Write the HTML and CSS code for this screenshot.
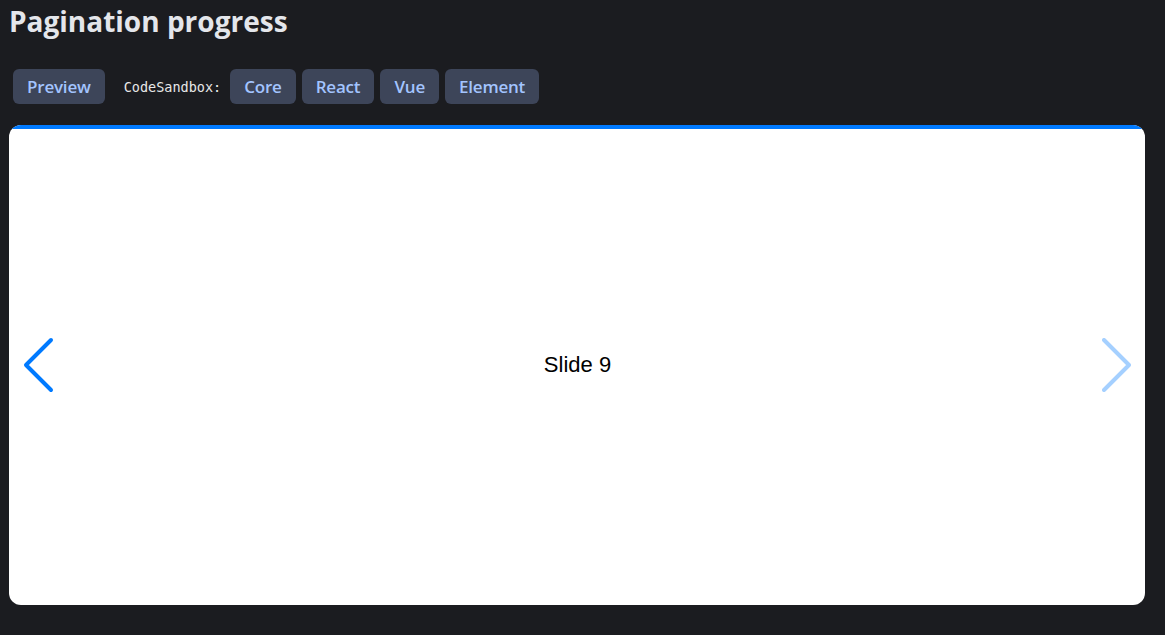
FILE: index.html
```html
<!DOCTYPE html>
<html>
<head>
<meta charset="utf-8">
<link rel="stylesheet" href="styles.css">
</head>
<body>
<h1 class="title">Pagination progress</h1>
<div class="toolbar">
  <button class="btn">Preview</button>
  <span class="label">CodeSandbox:</span>
  <button class="btn">Core</button>
  <button class="btn">React</button>
  <button class="btn">Vue</button>
  <button class="btn">Element</button>
</div>
<div class="swiper">
  <div class="progress"></div>
  <div class="slide">Slide 9</div>
  <button class="nav nav-prev" aria-label="Previous">
    <svg width="31" height="56" viewBox="0 0 31 56"><path d="M28 3 L3 28 L28 53" fill="none" stroke="currentColor" stroke-width="4" stroke-linecap="round" stroke-linejoin="round"/></svg>
  </button>
  <button class="nav nav-next disabled" aria-label="Next">
    <svg width="31" height="56" viewBox="0 0 31 56"><path d="M3 3 L28 28 L3 53" fill="none" stroke="currentColor" stroke-width="4" stroke-linecap="round" stroke-linejoin="round"/></svg>
  </button>
</div>
</body>
</html>
```
FILE: styles.css
```css
html, body {
  background: #1b1c20;
}
body {
  margin: 0;
  padding: 0 20px 0 9px;
  font-family: "Open Sans", "Noto Sans", sans-serif;
}
.title {
  margin: 0;
  padding-top: 2px;
  font-size: 28px;
  line-height: 38px;
  font-weight: 700;
  color: #e4e6eb;
}
.toolbar {
  display: flex;
  align-items: center;
  gap: 6px;
  margin: 29px 0 0 4px;
  height: 35px;
}
.btn {
  height: 35px;
  padding: 0 14px;
  border: 0;
  border-radius: 6px;
  background: #3d4559;
  color: #a3c4ff;
  font-family: "Open Sans", "Noto Sans", sans-serif;
  font-size: 17px;
  font-weight: 600;
  letter-spacing: -0.2px;
  cursor: pointer;
}
.label {
  margin: 0 3px 0 13px;
  font-family: "DejaVu Sans Mono", monospace;
  font-size: 13.5px;
  color: #e8e8e8;
}
.swiper {
  position: relative;
  margin-top: 21px;
  height: 480px;
  background: #fff;
  border-radius: 12px;
  overflow: hidden;
  display: flex;
  align-items: center;
  justify-content: center;
}
.progress {
  position: absolute;
  left: 0;
  top: 0;
  right: 0;
  height: 4px;
  background: #007aff;
}
.slide {
  font-family: "Liberation Sans", Arial, sans-serif;
  font-size: 22px;
  color: #000;
  padding-left: 1px;
}
.nav {
  position: absolute;
  top: 50%;
  margin-top: -28px;
  width: 31px;
  height: 56px;
  padding: 0;
  border: 0;
  background: none;
  color: #007aff;
  display: flex;
}
.nav-prev { left: 14px; }
.nav-next { right: 13px; }
.nav.disabled { opacity: 0.35; }
```
